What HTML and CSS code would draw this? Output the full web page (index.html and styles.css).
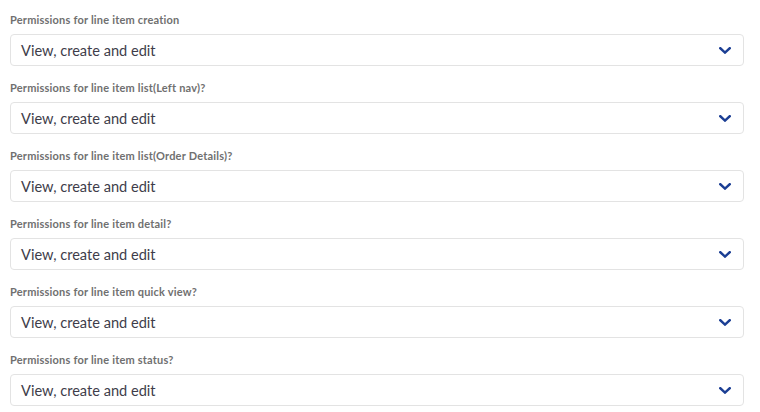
FILE: index.html
```html
<!DOCTYPE html>
<html lang="en">
<head>
<meta charset="utf-8">
<title>Permissions</title>
<link rel="stylesheet" href="styles.css">
</head>
<body>
<div class="form">
  <div class="field">
    <div class="label">Permissions for line item creation</div>
    <div class="select"><span class="value">View, create and edit</span><svg class="chev" viewBox="0 0 12 7" width="12" height="7"><path d="M1.3 1.2 L6 5.6 L10.7 1.2" fill="none" stroke="#1b3e94" stroke-width="2.4" stroke-linecap="square"/></svg></div>
  </div>
  <div class="field">
    <div class="label">Permissions for line item list(Left nav)?</div>
    <div class="select"><span class="value">View, create and edit</span><svg class="chev" viewBox="0 0 12 7" width="12" height="7"><path d="M1.3 1.2 L6 5.6 L10.7 1.2" fill="none" stroke="#1b3e94" stroke-width="2.4" stroke-linecap="square"/></svg></div>
  </div>
  <div class="field">
    <div class="label">Permissions for line item list(Order Details)?</div>
    <div class="select"><span class="value">View, create and edit</span><svg class="chev" viewBox="0 0 12 7" width="12" height="7"><path d="M1.3 1.2 L6 5.6 L10.7 1.2" fill="none" stroke="#1b3e94" stroke-width="2.4" stroke-linecap="square"/></svg></div>
  </div>
  <div class="field">
    <div class="label">Permissions for line item detail?</div>
    <div class="select"><span class="value">View, create and edit</span><svg class="chev" viewBox="0 0 12 7" width="12" height="7"><path d="M1.3 1.2 L6 5.6 L10.7 1.2" fill="none" stroke="#1b3e94" stroke-width="2.4" stroke-linecap="square"/></svg></div>
  </div>
  <div class="field">
    <div class="label">Permissions for line item quick view?</div>
    <div class="select"><span class="value">View, create and edit</span><svg class="chev" viewBox="0 0 12 7" width="12" height="7"><path d="M1.3 1.2 L6 5.6 L10.7 1.2" fill="none" stroke="#1b3e94" stroke-width="2.4" stroke-linecap="square"/></svg></div>
  </div>
  <div class="field">
    <div class="label">Permissions for line item status?</div>
    <div class="select"><span class="value">View, create and edit</span><svg class="chev" viewBox="0 0 12 7" width="12" height="7"><path d="M1.3 1.2 L6 5.6 L10.7 1.2" fill="none" stroke="#1b3e94" stroke-width="2.4" stroke-linecap="square"/></svg></div>
  </div>
</div>
</body>
</html>
```

FILE: styles.css
```css
html, body {
  margin: 0;
  padding: 0;
  background: #ffffff;
}
body {
  font-family: "Lato", "Noto Sans", sans-serif;
}
.form {
  width: 734px;
  padding: 12px 0 0 10px;
  display: flex;
  flex-direction: column;
}
.field {
  display: flex;
  flex-direction: column;
  margin-bottom: 14px;
}
.label {
  font-size: 11px;
  font-weight: 700;
  line-height: 16px;
  letter-spacing: 0.2px;
  color: #707070;
  margin-bottom: 6px;
}
.select {
  box-sizing: border-box;
  height: 32px;
  border: 1px solid #e3e3e3;
  border-radius: 4px;
  display: flex;
  align-items: center;
  justify-content: space-between;
  padding: 0 12px 0 10px;
}
.value {
  font-size: 14.6px;
  color: #3e3d4a;
}
.chev {
  display: block;
}
```
